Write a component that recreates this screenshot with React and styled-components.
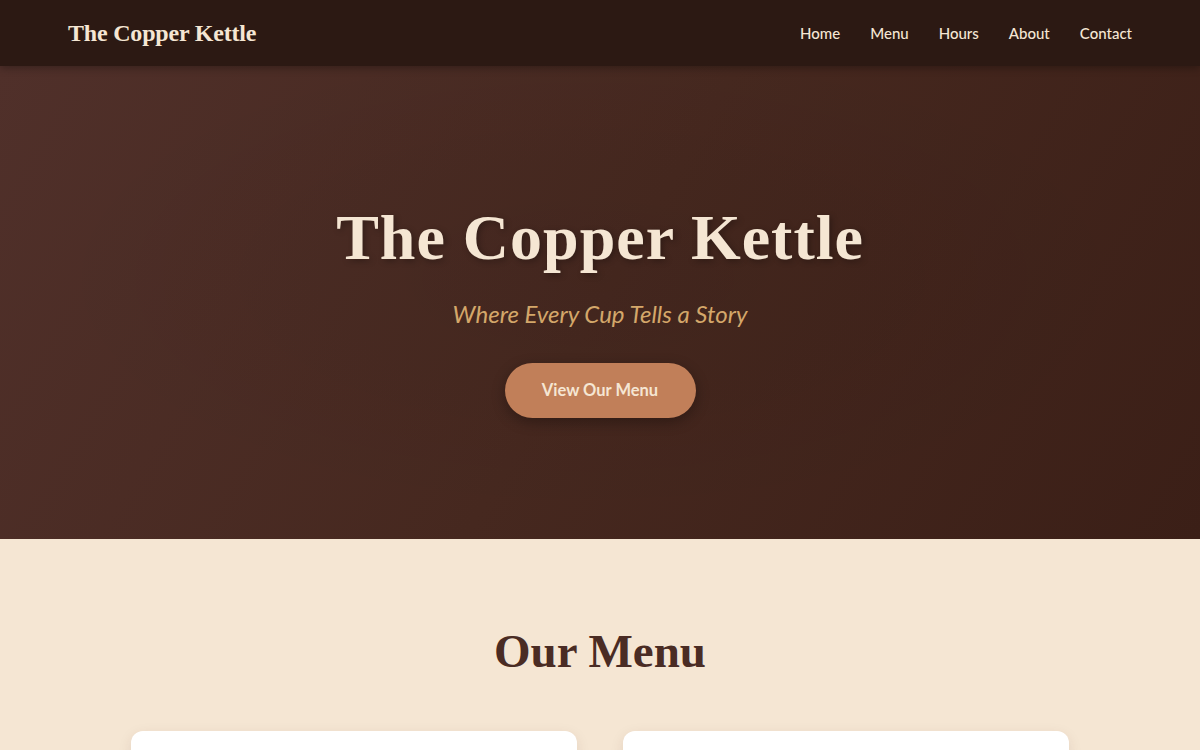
import styled, { createGlobalStyle } from "styled-components";

const GlobalStyle = createGlobalStyle`
  * { box-sizing: border-box; }
  body {
    margin: 0;
    font-family: Lato, "Open Sans", sans-serif;
    background: #f5e6d3;
    color: #4a2c24;
  }
`;

const navLinks = ["Home", "Menu", "Hours", "About", "Contact"];

const menuCards = [
  { title: "Espresso Drinks" },
  { title: "Pastries" },
];

const App = () => {
  return (
    <>
      <GlobalStyle />
      <Page>
        <NavBar>
          <Logo>The Copper Kettle</Logo>
          <NavList>
            {navLinks.map((link) => (
              <NavLink key={link} href={`#${link.toLowerCase()}`}>
                {link}
              </NavLink>
            ))}
          </NavList>
        </NavBar>
        <Hero>
          <HeroTitle>The Copper Kettle</HeroTitle>
          <Tagline>Where Every Cup Tells a Story</Tagline>
          <CtaButton>View Our Menu</CtaButton>
        </Hero>
        <MenuSection>
          <SectionTitle>Our Menu</SectionTitle>
          <CardGrid>
            {menuCards.map((card) => (
              <MenuCard key={card.title} />
            ))}
          </CardGrid>
        </MenuSection>
      </Page>
    </>
  );
};

export default App;

const Page = styled.div`
  display: flex;
  flex-direction: column;
  min-height: 100vh;
`;

const NavBar = styled.header`
  display: flex;
  align-items: center;
  justify-content: space-between;
  height: 66px;
  padding: 0 68px;
  background: #2c1913;
  box-shadow: 0 2px 8px rgba(0, 0, 0, 0.3);
  position: relative;
  z-index: 1;
`;

const Logo = styled.div`
  font-family: "Liberation Serif", "DejaVu Serif", serif;
  font-weight: 700;
  font-size: 24px;
  color: #f5e6d3;
  letter-spacing: -0.2px;
`;

const NavList = styled.nav`
  display: flex;
  align-items: center;
  gap: 30px;
`;

const NavLink = styled.a`
  font-family: Lato, sans-serif;
  font-size: 15px;
  font-weight: 500;
  color: #f5e6d3;
  text-decoration: none;
`;

const Hero = styled.section`
  display: flex;
  flex-direction: column;
  align-items: center;
  height: 473px;
  padding-top: 134px;
  background:
    radial-gradient(ellipse at 50% 45%, rgba(0, 0, 0, 0.05), rgba(0, 0, 0, 0) 70%),
    linear-gradient(120deg, #50302a 0%, #46281f 50%, #3b1f17 100%);
`;

const HeroTitle = styled.h1`
  margin: 0;
  font-family: "Liberation Serif", "DejaVu Serif", serif;
  font-weight: 700;
  font-size: 64px;
  line-height: 1.2;
  letter-spacing: 1px;
  color: #f5e6d3;
  text-shadow: 2px 2px 6px rgba(0, 0, 0, 0.3);
`;

const Tagline = styled.p`
  margin: 22px 0 0;
  font-family: Lato, sans-serif;
  font-style: italic;
  font-size: 24px;
  color: #d4a76a;
`;

const CtaButton = styled.button`
  margin-top: 35px;
  width: 191px;
  height: 55px;
  border: none;
  border-radius: 28px;
  background: #c17f59;
  color: #f5e6d3;
  font-family: Lato, sans-serif;
  font-weight: 700;
  font-size: 16.5px;
  cursor: pointer;
  box-shadow: 0 4px 14px rgba(0, 0, 0, 0.3);
`;

const MenuSection = styled.section`
  display: flex;
  flex-direction: column;
  align-items: center;
  padding: 84px 131px 60px;
  background: #f5e6d3;
`;

const SectionTitle = styled.h2`
  margin: 0;
  font-family: "Liberation Serif", "DejaVu Serif", serif;
  font-weight: 700;
  font-size: 47px;
  line-height: 1.2;
  color: #4a2c24;
`;

const CardGrid = styled.div`
  display: grid;
  grid-template-columns: 1fr 1fr;
  gap: 46px;
  width: 100%;
  margin-top: 52px;
`;

const MenuCard = styled.div`
  height: 260px;
  background: #ffffff;
  border-radius: 12px;
  box-shadow: 0 4px 14px rgba(74, 44, 36, 0.1);
`;
